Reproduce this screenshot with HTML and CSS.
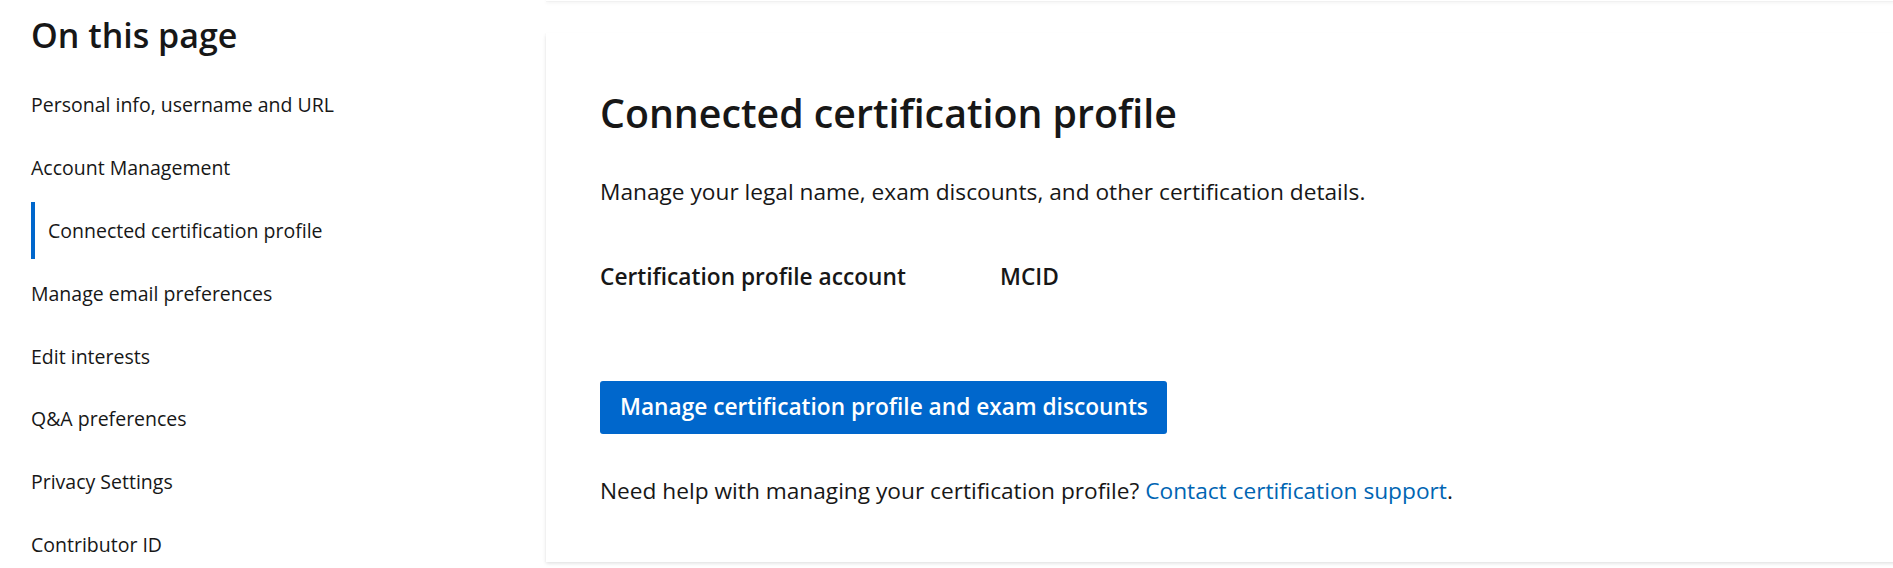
FILE: index.html
```html
<!DOCTYPE html>
<html lang="en">
<head>
<meta charset="utf-8">
<title>Connected certification profile</title>
<link rel="stylesheet" href="styles.css">
</head>
<body>
<div class="page">
  <nav class="toc">
    <h2 class="toc-title">On this page</h2>
    <ul class="toc-list">
      <li class="toc-item"><a class="toc-link" href="#">Personal info, username and URL</a></li>
      <li class="toc-item"><a class="toc-link" href="#">Account Management</a></li>
      <li class="toc-item"><a class="toc-link is-active" href="#">Connected certification profile</a></li>
      <li class="toc-item"><a class="toc-link" href="#">Manage email preferences</a></li>
      <li class="toc-item"><a class="toc-link" href="#">Edit interests</a></li>
      <li class="toc-item"><a class="toc-link" href="#">Q&amp;A preferences</a></li>
      <li class="toc-item"><a class="toc-link" href="#">Privacy Settings</a></li>
      <li class="toc-item"><a class="toc-link" href="#">Contributor ID</a></li>
    </ul>
  </nav>
  <main class="content">
    <div class="card card-prev"></div>
    <section class="card card-main">
      <h1 class="card-title">Connected certification profile</h1>
      <p class="card-desc">Manage your legal name, exam discounts, and other certification details.</p>
      <div class="field-row">
        <span class="field-label">Certification profile account</span>
        <span class="field-value">MCID</span>
      </div>
      <button class="btn-primary" type="button">Manage certification profile and exam discounts</button>
      <p class="help">Need help with managing your certification profile? <a class="link" href="#">Contact certification support</a>.</p>
    </section>
  </main>
</div>
</body>
</html>
```
FILE: styles.css
```css
html, body {
  margin: 0;
  padding: 0;
  background: #ffffff;
  overflow: hidden;
}

body {
  font-family: "Open Sans", "Noto Sans", sans-serif;
  color: #171717;
  font-size: 19.5px;
  line-height: 26px;
}

.page {
  display: flex;
  align-items: flex-start;
  width: 2000px;
}

.toc {
  flex: none;
  width: 515px;
  padding: 13px 0 0 31px;
}

.toc-title {
  margin: 0 0 16.8px 0;
  font-size: 34px;
  line-height: 44px;
  font-weight: 600;
  color: #171717;
}

.toc-list {
  list-style: none;
  margin: 0;
  padding: 0;
}

.toc-item {
  padding: 3px 0;
}

.toc-link {
  display: block;
  padding: 15.43px 0;
  color: #171717;
  text-decoration: none;
}

.toc-link.is-active {
  border-left: 4px solid #0067cc;
  padding-left: 13px;
}

.content {
  flex: none;
  width: 1440px;
  display: flex;
  flex-direction: column;
}

.card {
  background: #ffffff;
  box-shadow: 0 1.6px 3.6px 0 rgba(0, 0, 0, 0.13), 0 0.3px 0.9px 0 rgba(0, 0, 0, 0.11);
}

.card-prev {
  height: 1px;
}

.card-main {
  margin-top: 32px;
  padding: 55px 54px 55.95px 54px;
  font-size: 22.7px;
  line-height: 30px;
}

.card-title {
  margin: 0;
  font-size: 39.3px;
  line-height: 50px;
  font-weight: 600;
  color: #171717;
}

.card-desc {
  margin: 38.65px 0 0 0;
}

.field-row {
  display: flex;
  margin-top: 55.7px;
  font-weight: 600;
}

.field-label {
  width: 400px;
}

.btn-primary {
  display: block;
  margin-top: 88.65px;
  padding: 11.5px 19px 11.5px 20px;
  border: none;
  border-radius: 3px;
  background: #0067cc;
  color: #ffffff;
  font-family: inherit;
  font-size: 22.7px;
  line-height: 30px;
  font-weight: 600;
}

.help {
  margin: 42.05px 0 0 0;
}

.link {
  color: #0065b3;
  text-decoration: none;
}
```
